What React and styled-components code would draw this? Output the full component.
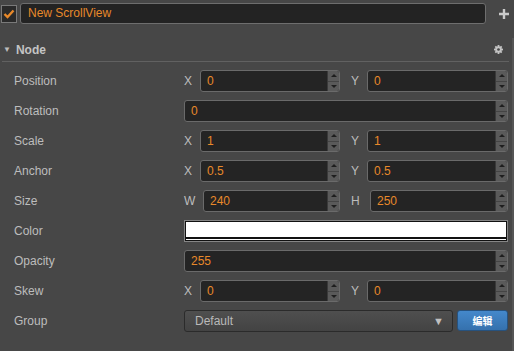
import React from "react";
import styled, { createGlobalStyle } from "styled-components";

const Global = createGlobalStyle`
  html, body {
    margin: 0;
    padding: 0;
    background: #474747;
  }
  body {
    font-family: "Liberation Sans", Arial, sans-serif;
    font-size: 12px;
    color: #bdbdbd;
  }
`;

const Panel = styled.div`
  width: 514px;
  height: 351px;
  box-sizing: border-box;
  background: #474747;
  overflow: hidden;
`;

const TopBar = styled.div`
  display: flex;
  align-items: center;
  height: 21px;
  padding: 3px 0 0 1px;
`;

const Check = styled.div`
  width: 14px;
  height: 16px;
  border: 1px solid #7a7a7a;
  background: #2a2a2a;
  display: flex;
  align-items: center;
  justify-content: center;
  margin-right: 3px;
`;

const NameInput = styled.div`
  width: 457px;
  height: 19px;
  border: 1px solid #6e6e6e;
  border-radius: 3px;
  background: #232323;
  color: #e8892a;
  font-size: 12px;
  line-height: 19px;
  padding-left: 7px;
  box-sizing: content-box;
`;

const PlusBtn = styled.div`
  margin-left: 13px;
  display: flex;
  align-items: center;
`;

const Section = styled.div`
  margin-top: 14px;
  border-right: 2px solid #555;
  height: 313px;
  box-sizing: border-box;
`;

const SectionHead = styled.div`
  display: flex;
  align-items: center;
  height: 23px;
  margin: 0 3px 0 2px;
  padding-left: 1px;
  border-bottom: 1px solid #616161;
  color: #c4c4c4;
  font-weight: bold;
  font-size: 12px;
`;

const Caret = styled.span`
  font-size: 8px;
  margin-right: 5px;
  color: #bcbcbc;
`;

const HeadTitle = styled.span`
  flex: 1;
`;

const Gear = styled.span`
  margin-right: 6px;
  display: flex;
`;

const Rows = styled.div`
  padding-top: 4px;
`;

const Row = styled.div`
  display: flex;
  align-items: center;
  height: 30px;
`;

const Label = styled.div`
  width: 170px;
  padding-left: 14px;
  color: #bdbdbd;
  font-size: 12px;
`;

const Value = styled.div`
  width: 324px;
`;

const Pair = styled.div`
  display: grid;
  grid-template-columns: 156px 157px;
  column-gap: 11px;
`;

const Axis = styled.div`
  display: flex;
  align-items: center;
`;

const AxisLabel = styled.span`
  width: ${(p) => p.$w}px;
  flex: none;
  color: #bdbdbd;
  font-size: 12px;
`;

const Field = styled.div`
  flex: 1;
  display: flex;
  height: 20px;
  border: 1px solid #6a6a6a;
  border-radius: 3px;
  background: #242424;
  overflow: hidden;
`;

const FieldText = styled.div`
  flex: 1;
  color: #e8892a;
  font-size: 12px;
  line-height: 20px;
  padding-left: 6px;
`;

const Spinner = styled.div`
  width: 11px;
  display: flex;
  flex-direction: column;
  background: #5a5a5a;
  border-left: 1px solid #3a3a3a;
`;

const SpinHalf = styled.div`
  flex: 1;
  display: flex;
  align-items: center;
  justify-content: center;
  border-top: ${(p) => (p.$bottom ? "1px solid #444" : "none")};

  &::after {
    content: "";
    border-left: 3px solid transparent;
    border-right: 3px solid transparent;
    ${(p) =>
      p.$bottom
        ? "border-top: 3px solid #1e1e1e;"
        : "border-bottom: 3px solid #1e1e1e;"}
  }
`;

const ColorField = styled.div`
  height: 20px;
  border: 1px solid #858585;
`;

const ColorInner = styled.div`
  height: 18px;
  border: 1px solid #111;
  background: linear-gradient(
    to bottom,
    #fff 0,
    #fff 15px,
    #111 15px,
    #111 17px,
    #fff 17px
  );
`;

const GroupWrap = styled.div`
  display: flex;
  gap: 4px;
`;

const Select = styled.div`
  flex: 1;
  height: 20px;
  display: flex;
  align-items: center;
  justify-content: space-between;
  padding: 0 8px 0 10px;
  border: 1px solid #2b2b2b;
  border-radius: 3px;
  background: linear-gradient(#4f4f4f, #434343);
  color: #b9b9b9;
  font-size: 12px;
`;

const SelectArrow = styled.span`
  font-size: 11px;
  color: #c0c0c0;
`;

const EditButton = styled.div`
  width: 49px;
  height: 19px;
  display: flex;
  align-items: center;
  justify-content: center;
  border: 1px solid #27527e;
  border-radius: 3px;
  background: linear-gradient(#4488cb, #3571ad);
  color: #fff;
  font-size: 10px;
  font-weight: bold;
  font-family: "Noto Sans CJK SC", sans-serif;
`;

function NumField({ value }) {
  return (
    <Field>
      <FieldText>{value}</FieldText>
      <Spinner>
        <SpinHalf />
        <SpinHalf $bottom />
      </Spinner>
    </Field>
  );
}

function Vec({ a, b, x, y, w = 16 }) {
  return (
    <Pair>
      <Axis>
        <AxisLabel $w={w}>{a}</AxisLabel>
        <NumField value={x} />
      </Axis>
      <Axis>
        <AxisLabel $w={w}>{b}</AxisLabel>
        <NumField value={y} />
      </Axis>
    </Pair>
  );
}

export default function App() {
  return (
    <Panel>
      <Global />
      <TopBar>
        <Check>
          <svg width="12" height="10" viewBox="0 0 12 10">
            <path d="M1.5 5 L4.5 8 L10.5 1.5" stroke="#e8892a" strokeWidth="2.4" fill="none" />
          </svg>
        </Check>
        <NameInput>New ScrollView</NameInput>
        <PlusBtn>
          <svg width="10" height="10" viewBox="0 0 10 10">
            <path d="M5 0 V10 M0 5 H10" stroke="#c9c9c9" strokeWidth="2.4" />
          </svg>
        </PlusBtn>
      </TopBar>
      <Section>
        <SectionHead>
          <Caret>▼</Caret>
          <HeadTitle>Node</HeadTitle>
          <Gear>
            <svg width="9" height="9" viewBox="0 0 10 10">
              <g fill="#c4c4c4">
                <circle cx="5" cy="5" r="3.6" />
                <rect x="4" y="0" width="2" height="10" />
                <rect x="0" y="4" width="10" height="2" />
                <rect x="4" y="0" width="2" height="10" transform="rotate(45 5 5)" />
                <rect x="4" y="0" width="2" height="10" transform="rotate(-45 5 5)" />
              </g>
              <circle cx="5" cy="5" r="1.5" fill="#474747" />
            </svg>
          </Gear>
        </SectionHead>
        <Rows>
          <Row>
            <Label>Position</Label>
            <Value><Vec a="X" b="Y" x="0" y="0" /></Value>
          </Row>
          <Row>
            <Label>Rotation</Label>
            <Value><NumField value="0" /></Value>
          </Row>
          <Row>
            <Label>Scale</Label>
            <Value><Vec a="X" b="Y" x="1" y="1" /></Value>
          </Row>
          <Row>
            <Label>Anchor</Label>
            <Value><Vec a="X" b="Y" x="0.5" y="0.5" /></Value>
          </Row>
          <Row>
            <Label>Size</Label>
            <Value><Vec a="W" b="H" x="240" y="250" w={19} /></Value>
          </Row>
          <Row>
            <Label>Color</Label>
            <Value>
              <ColorField>
                <ColorInner />
              </ColorField>
            </Value>
          </Row>
          <Row>
            <Label>Opacity</Label>
            <Value><NumField value="255" /></Value>
          </Row>
          <Row>
            <Label>Skew</Label>
            <Value><Vec a="X" b="Y" x="0" y="0" /></Value>
          </Row>
          <Row>
            <Label>Group</Label>
            <Value>
              <GroupWrap>
                <Select>
                  <span>Default</span>
                  <SelectArrow>▼</SelectArrow>
                </Select>
                <EditButton>编辑</EditButton>
              </GroupWrap>
            </Value>
          </Row>
        </Rows>
      </Section>
    </Panel>
  );
}
